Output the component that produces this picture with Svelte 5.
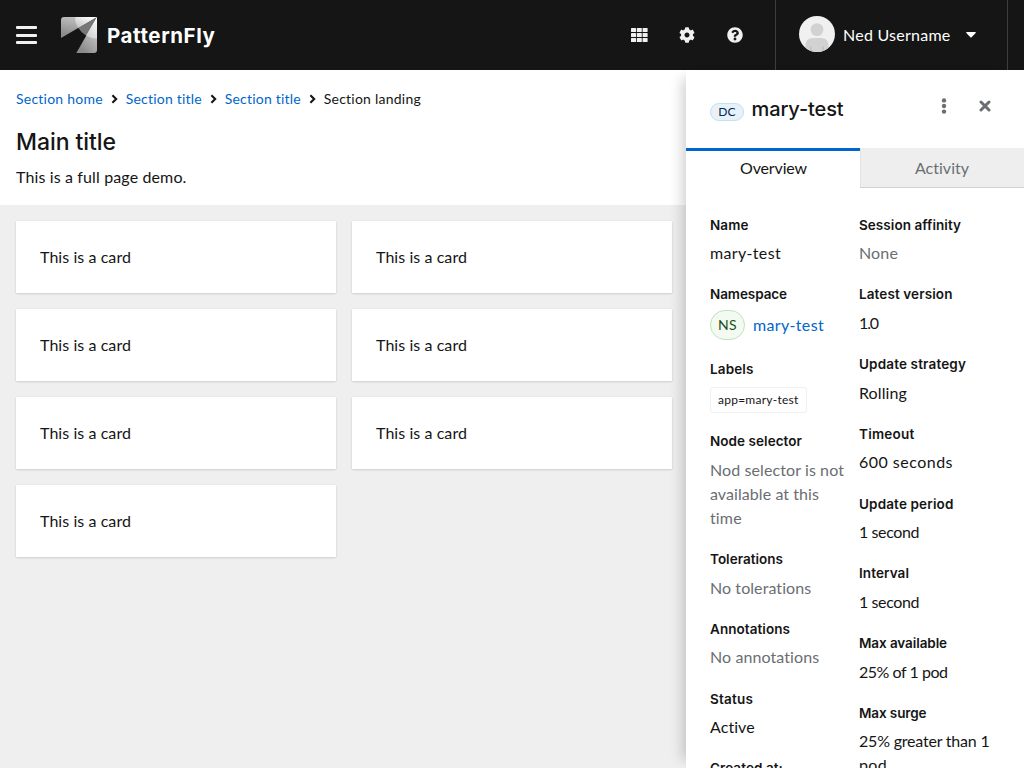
<script>
  const crumbs = [
    { text: 'Section home', width: 87, link: true },
    { text: 'Section title', width: 76.5, link: true },
    { text: 'Section title', width: 76.5, link: true },
    { text: 'Section landing', width: 97.5, link: false }
  ];
  const cards = [1, 2, 3, 4, 5, 6, 7];
  const left = [
    { term: 'Name', tw: 38.5, lines: [['mary-test', 71]] },
    { term: 'Namespace', tw: 77, kind: 'namespace' },
    { term: 'Labels', tw: 43.5, kind: 'labels' },
    { term: 'Node selector', tw: 92, muted: true, lines: [['Nod selector is not', 134], ['available at this', 109], ['time', 32]] },
    { term: 'Tolerations', tw: 73, muted: true, lines: [['No tolerations', 101.5]] },
    { term: 'Annotations', tw: 80, muted: true, lines: [['No annotations', 109.5]] },
    { term: 'Status', tw: 43, lines: [['Active', 45]] },
    { term: 'Created at:', tw: 73, lines: [['Sep 15, 11:17 am', 124]] }
  ];
  const right = [
    { term: 'Session affinity', tw: 102, muted: true, lines: [['None', 39]] },
    { term: 'Latest version', tw: 93.5, lines: [['1.0', 19]] },
    { term: 'Update strategy', tw: 107, lines: [['Rolling', 48]] },
    { term: 'Timeout', tw: 55.5, lines: [['600 seconds', 94]] },
    { term: 'Update period', tw: 94.5, lines: [['1 second', 60]] },
    { term: 'Interval', tw: 50, lines: [['1 second', 60]] },
    { term: 'Max available', tw: 88, lines: [['25% of 1 pod', 88.5]] },
    { term: 'Max surge', tw: 67.5, lines: [['25% greater than 1', 130.5], ['pod', 28]] }
  ];

  // Tracks the text out or in so that it spans the given width in pixels.
  function fit(node, width) {
    const natural = node.getBoundingClientRect().width;
    node.style.letterSpacing = (width - natural) / node.textContent.length + 'px';
  }
</script>

{#snippet group(item)}
  <div class="group">
    <dt><span class="fit" use:fit={item.tw}>{item.term}</span></dt>
    {#if item.kind === 'namespace'}
      <dd class="ns-row"><span class="badge ns"><span class="fit" use:fit={19}>NS</span></span><a href="#ns" class="fit" use:fit={71}>mary-test</a></dd>
    {:else if item.kind === 'labels'}
      <dd class="chip-row"><span class="chip"><span class="fit" use:fit={80.5}>app=mary-test</span></span></dd>
    {:else}
      <dd class:muted={item.muted}>
        {#each item.lines as line}
          <div class="line"><span class="fit" use:fit={line[1]}>{line[0]}</span></div>
        {/each}
      </dd>
    {/if}
  </div>
{/snippet}

<div class="page">
  <header>
    <button class="burger" aria-label="Navigation"><i></i><i></i><i></i></button>
    <div class="brand">
      <svg width="36" height="36" viewBox="0 0 36 36">
        <defs>
          <linearGradient id="g1" x1="0.1" y1="0.8" x2="0.4" y2="0"><stop offset="0" stop-color="#8c8c8c" /><stop offset="1" stop-color="#c2c2c2" /></linearGradient>
          <linearGradient id="g2" x1="0.1" y1="0.8" x2="0.7" y2="0.1"><stop offset="0" stop-color="#c8c8c8" /><stop offset="1" stop-color="#fafafa" /></linearGradient>
          <linearGradient id="g3" x1="0.4" y1="1" x2="0.7" y2="0.5"><stop offset="0" stop-color="#8a8a8a" /><stop offset="1" stop-color="#b8b8b8" /></linearGradient>
          <linearGradient id="g4" x1="0.3" y1="1" x2="0.8" y2="0.1"><stop offset="0" stop-color="#cecece" /><stop offset="1" stop-color="#fafafa" /></linearGradient>
        </defs>
        <path d="M3 0H36L0 21V3Q0 0 3 0Z" fill="url(#g1)" />
        <path d="M14.2 0H36L17.4 10.9Q13.7 6 14.2 0Z" fill="url(#g2)" />
        <path d="M36 0 17.4 10.9Q20 15.5 25 18.6Z" fill="#777" />
        <path d="M36 0V33Q36 36 33 36H15.3Z" fill="url(#g3)" />
        <path d="M36 0V21.6Q30 21.8 25 18.6Z" fill="url(#g4)" />
      </svg>
      <span class="wordmark fit" use:fit={108.5}>PatternFly</span>
    </div>
    <div class="tools">
      <svg width="18" height="14" viewBox="0 0 18 14"><g fill="#f0f0f0">{#each [0, 5, 10] as y}{#each [0, 5.8, 11.6] as x}<rect {x} {y} width="5" height="4" rx=".6" />{/each}{/each}</g></svg>
      <svg width="16" height="16" viewBox="0 0 512 512"><path fill="#f0f0f0" d="M487.4 315.7l-42.6-24.6c4.3-23.2 4.3-47 0-70.2l42.6-24.6c4.9-2.8 7.1-8.6 5.5-14-11.1-35.6-30-67.8-54.7-94.6-3.8-4.1-10-5.1-14.8-2.3L380.8 110c-17.9-15.4-38.5-27.3-60.8-35.1V25.8c0-5.6-3.9-10.5-9.4-11.7-36.7-8.2-74.3-7.8-109.2 0-5.5 1.2-9.4 6.1-9.4 11.7V75c-22.2 7.9-42.8 19.8-60.8 35.1L88.7 85.5c-4.9-2.8-11-1.9-14.8 2.3-24.7 26.7-43.6 58.9-54.7 94.6-1.7 5.4.6 11.2 5.5 14L67.3 221c-4.3 23.2-4.3 47 0 70.2l-42.6 24.6c-4.9 2.8-7.1 8.6-5.5 14 11.1 35.6 30 67.8 54.7 94.6 3.8 4.1 10 5.1 14.8 2.3l42.6-24.6c17.9 15.4 38.5 27.3 60.8 35.1v49.2c0 5.6 3.9 10.5 9.4 11.7 36.7 8.2 74.3 7.8 109.2 0 5.5-1.2 9.4-6.1 9.4-11.7v-49.2c22.2-7.9 42.8-19.8 60.8-35.1l42.6 24.6c4.9 2.8 11 1.9 14.8-2.3 24.7-26.7 43.6-58.9 54.7-94.6 1.5-5.5-.7-11.3-5.6-14.1zM256 336c-44.1 0-80-35.9-80-80s35.9-80 80-80 80 35.9 80 80-35.9 80-80 80z" /></svg>
      <svg width="16" height="16" viewBox="0 0 512 512"><path fill="#f0f0f0" d="M504 256c0 136.997-111.043 248-248 248S8 392.997 8 256C8 119.083 119.043 8 256 8s248 111.083 248 248zM262.655 90c-54.497 0-89.255 22.957-116.549 63.758-3.536 5.286-2.353 12.415 2.715 16.258l34.699 26.31c5.205 3.947 12.621 3.008 16.665-2.122 17.864-22.658 30.113-35.797 57.303-35.797 20.429 0 45.698 13.148 45.698 32.958 0 14.976-12.363 22.667-32.534 33.976C247.128 238.528 216 254.941 216 296v4c0 6.627 5.373 12 12 12h56c6.627 0 12-5.373 12-12v-1.333c0-28.462 83.186-29.647 83.186-106.667 0-58.002-60.165-102-116.531-102zM256 338c-25.365 0-46 20.635-46 46 0 25.364 20.635 46 46 46s46-20.636 46-46c0-25.365-20.635-46-46-46z" /></svg>
    </div>
    <div class="user">
      <svg width="36" height="36" viewBox="0 0 36 36"><defs><clipPath id="av"><circle cx="18" cy="18" r="18" /></clipPath></defs><g clip-path="url(#av)"><rect width="36" height="36" fill="#f0f0f0" /><circle cx="18" cy="13.6" r="6.4" fill="#d2d2d2" /><path d="M6.5 36V30Q6.5 22 14 22H22Q29.5 22 29.5 30V36Z" fill="#d2d2d2" /><path d="M11.3 30.5H12.5V36H11.3ZM23.5 30.5H24.7V36H23.5Z" fill="#b8bbbe" /></g></svg>
      <span class="uname fit" use:fit={107.5}>Ned Username</span>
      <svg class="caret" width="10" height="6" viewBox="0 0 10 6"><path d="M.8 0H9.2Q10.3.3 9.6 1.1L5.6 5.3Q5 5.9 4.4 5.3L.4 1.1Q-.3.3.8 0Z" fill="#fff" /></svg>
    </div>
  </header>
  <div class="body">
    <main>
      <section class="intro">
        <nav>
          {#each crumbs as c, i}
            {#if i}<svg width="7" height="10" viewBox="0 0 7 10"><path d="M1.4 1.2 5.2 5 1.4 8.8" fill="none" stroke="#151515" stroke-width="2.1" /></svg>{/if}
            {#if c.link}<a href="#s" class="fit" use:fit={c.width}>{c.text}</a>{:else}<span class="fit" use:fit={c.width}>{c.text}</span>{/if}
          {/each}
        </nav>
        <h1><span class="fit" use:fit={100}>Main title</span></h1>
        <p><span class="fit" use:fit={170.5}>This is a full page demo.</span></p>
      </section>
      <section class="cards">
        {#each cards as c}<article><span class="fit" use:fit={91}>This is a card</span></article>{/each}
      </section>
    </main>
    <aside>
      <div class="head">
        <span class="badge dc"><span class="fit" use:fit={17.5}>DC</span></span>
        <h2><span class="fit" use:fit={92}>mary-test</span></h2>
        <svg class="kebab" width="6" height="16" viewBox="0 0 6 16"><g fill="#6a6e73"><circle cx="3" cy="2.4" r="2.2" /><circle cx="3" cy="8" r="2.2" /><circle cx="3" cy="13.6" r="2.2" /></g></svg>
        <svg class="close" width="12" height="12" viewBox="0 0 12 12"><path d="M2 2 10 10M10 2 2 10" stroke="#6a6e73" stroke-width="3" stroke-linecap="round" /></svg>
      </div>
      <div class="tabs">
        <button class="tab active"><span class="fit" use:fit={67}>Overview</span></button>
        <button class="tab"><span class="fit" use:fit={54.5}>Activity</span></button>
      </div>
      <div class="details">
        <dl>{#each left as item}{@render group(item)}{/each}</dl>
        <dl>{#each right as item}{@render group(item)}{/each}</dl>
      </div>
    </aside>
  </div>
</div>

<style>
  :global(body) { margin: 0; overflow: hidden; }
  .page { width: 1024px; height: 768px; overflow: hidden; display: flex; flex-direction: column; font: 400 16px/24px Lato, sans-serif; color: #151515; }
  svg { display: block; flex: none; }
  button { border: 0; padding: 0; background: none; font: inherit; color: inherit; }
  a { color: #06c; text-decoration: none; }
  .fit { display: inline-block; white-space: nowrap; }
  header { height: 70px; flex: none; background: #151515; color: #fff; display: flex; align-items: center; }
  .burger { margin-left: 16px; width: 21px; display: flex; flex-direction: column; gap: 4.5px; }
  .burger i { height: 3px; border-radius: 1px; background: #f0f0f0; }
  .brand { margin-left: 24px; display: flex; align-items: center; gap: 10px; }
  .wordmark { padding-top: 2px; font: 700 20.5px/28px Inter, sans-serif; }
  .tools { margin-left: auto; display: flex; align-items: center; gap: 32px; padding-right: 32px; }
  .tools svg:first-child { margin-right: -2px; }
  .user { height: 70px; box-sizing: border-box; width: 233px; border: 1px solid #3c3f42; border-width: 0 1px; margin-right: 16px; padding-left: 23px; display: flex; align-items: center; }
  .user svg:first-child { margin-bottom: 2px; }
  .uname { margin-left: 8px; }
  .caret { margin-left: 15.5px; }
  .body { flex: 1; min-height: 0; display: flex; }
  main { width: 686px; background: #efefef; }
  .intro { background: #fff; height: 135px; box-sizing: border-box; padding: 18px 16px 0; }
  nav { display: flex; align-items: center; height: 22px; font-size: 14px; }
  nav svg { margin: 0 8px; }
  h1 { margin: 16px 0 0; font: 500 23px/32px Inter, sans-serif; }
  p { margin: 7px 0 0; }
  .cards { padding: 16px; display: grid; grid-template-columns: 320px 320px; gap: 16px; }
  article { height: 72px; box-sizing: border-box; padding: 24px; background: #fff; box-shadow: 0 1px 2px rgba(3, 3, 3, .12), 0 0 2px rgba(3, 3, 3, .06); }
  aside { position: relative; width: 338px; background: #fff; box-shadow: -12px 0 12px -8px rgba(3, 3, 3, .18); display: flex; flex-direction: column; }
  .head { height: 78px; flex: none; box-sizing: border-box; padding: 0 33.5px 0 24px; display: flex; align-items: center; }
  .badge { box-sizing: border-box; display: inline-flex; align-items: center; justify-content: center; border: 1px solid; }
  .dc { width: 34px; height: 18px; border-radius: 9px; margin-top: 6px; background: #e7f1fa; border-color: #bee1f4; color: #002952; font-size: 12px; line-height: 16px; }
  h2 { margin: 0 auto 0 7.5px; font: 500 20px/26px Inter, sans-serif; }
  .kebab { margin-right: 31.5px; margin-top: -6px; }
  .close { margin-top: -6px; }
  .tabs { display: flex; flex: none; height: 40px; }
  .tab { flex: 1; box-sizing: border-box; height: 40px; background: #eee; color: #6a6e73; margin-left: -1px; box-shadow: inset 0 -1px #d2d2d2, inset 1px 0 #e2e2e2; }
  .tab.active { flex: 0 0 175px; margin: 0; box-shadow: inset 0 3px #06c; background: #fff; color: #151515; }
  .details { padding: 26.5px 0 0 24px; display: grid; grid-template-columns: 149px 1fr; height: 0; }
  dl { margin: 0; }
  .group { margin-bottom: 19.25px; }
  dt { height: 21px; font: 600 13.5px/21px Inter, sans-serif; }
  dd { margin: 5.5px 0 0; }
  .line { height: 24px; }
  .muted { color: #6a6e73; }
  .ns-row { height: 29.25px; display: flex; align-items: center; gap: 8px; }
  .ns { width: 35px; height: 30px; border-radius: 15px; background: #f3faf2; border-color: #bde5b8; color: #1e4f18; font-size: 14px; }
  .chip-row { height: 26.25px; }
  .chip { display: inline-flex; align-items: center; height: 26px; box-sizing: border-box; padding: 0 7px; border: 1px solid #f0f0f0; border-radius: 3px; font-size: 12px; line-height: 18px; }
</style>
